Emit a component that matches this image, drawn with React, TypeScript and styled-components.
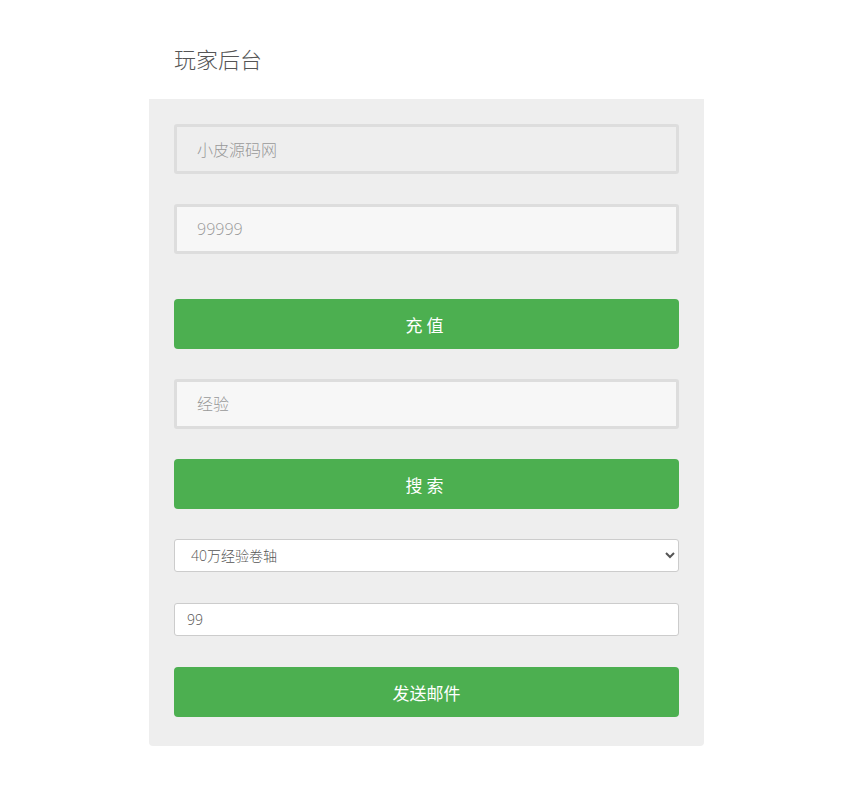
import styled, { createGlobalStyle } from "styled-components";

const GlobalStyle = createGlobalStyle`
  body {
    margin: 0;
    background: #fff;
    font-family: "Open Sans", "Noto Sans CJK SC", sans-serif;
  }
`;

const Wrapper = styled.div`
  width: 555px;
  margin: 0 auto;
  padding-left: 4px;
`;

const Title = styled.h1`
  margin: 0;
  height: 99px;
  padding: 43px 0 0 25px;
  box-sizing: border-box;
  font-size: 22px;
  font-weight: 300;
  color: #555;
  line-height: 32px;
`;

const Panel = styled.div`
  background: #eeeeee;
  border-radius: 0 0 4px 4px;
  padding: 25px 25px 29px;
  display: flex;
  flex-direction: column;
`;

const BigInput = styled.input<{ $gap?: number }>`
  box-sizing: border-box;
  height: 50px;
  width: 100%;
  margin-bottom: ${(p) => p.$gap ?? 30}px;
  padding: 0 20px;
  border: 3px solid #dddddd;
  border-radius: 3px;
  background: ${(p) => (p.disabled ? "#eeeeee" : "#f7f7f7")};
  font-family: inherit;
  font-size: 16px;
  font-weight: 300;
  color: #999;
  outline: none;
  &::placeholder {
    color: #999;
  }
`;

const GreenButton = styled.button<{ $spaced?: boolean }>`
  height: 50px;
  width: 100%;
  margin-bottom: 30px;
  border: none;
  border-radius: 4px;
  background: #4caf50;
  color: #fff;
  font-family: inherit;
  font-size: 17px;
  letter-spacing: ${(p) => (p.$spaced ? "4px" : "0")};
  cursor: pointer;
`;

const Select = styled.select`
  box-sizing: border-box;
  height: 33px;
  width: 100%;
  margin-bottom: 31px;
  padding: 0 12px;
  border: 1px solid #cccccc;
  border-radius: 3px;
  background: #fff;
  font-family: inherit;
  font-size: 14px;
  font-weight: 300;
  color: #555;
`;

const SmallInput = styled.input`
  box-sizing: border-box;
  height: 33px;
  width: 100%;
  margin-bottom: 31px;
  padding: 0 12px;
  border: 1px solid #cccccc;
  border-radius: 3px;
  background: #fff;
  font-family: inherit;
  font-size: 14px;
  font-weight: 300;
  color: #555;
  outline: none;
`;

const LastButton = styled(GreenButton)`
  margin-bottom: 0;
`;

export default function App() {
  return (
    <Wrapper>
      <GlobalStyle />
      <Title>玩家后台</Title>
      <Panel>
        <BigInput disabled value="小皮源码网" readOnly />
        <BigInput placeholder="99999" $gap={45} />
        <GreenButton $spaced>充值</GreenButton>
        <BigInput placeholder="经验" />
        <GreenButton $spaced>搜索</GreenButton>
        <Select defaultValue="1">
          <option value="1">40万经验卷轴</option>
        </Select>
        <SmallInput defaultValue="99" />
        <LastButton>发送邮件</LastButton>
      </Panel>
    </Wrapper>
  );
}
